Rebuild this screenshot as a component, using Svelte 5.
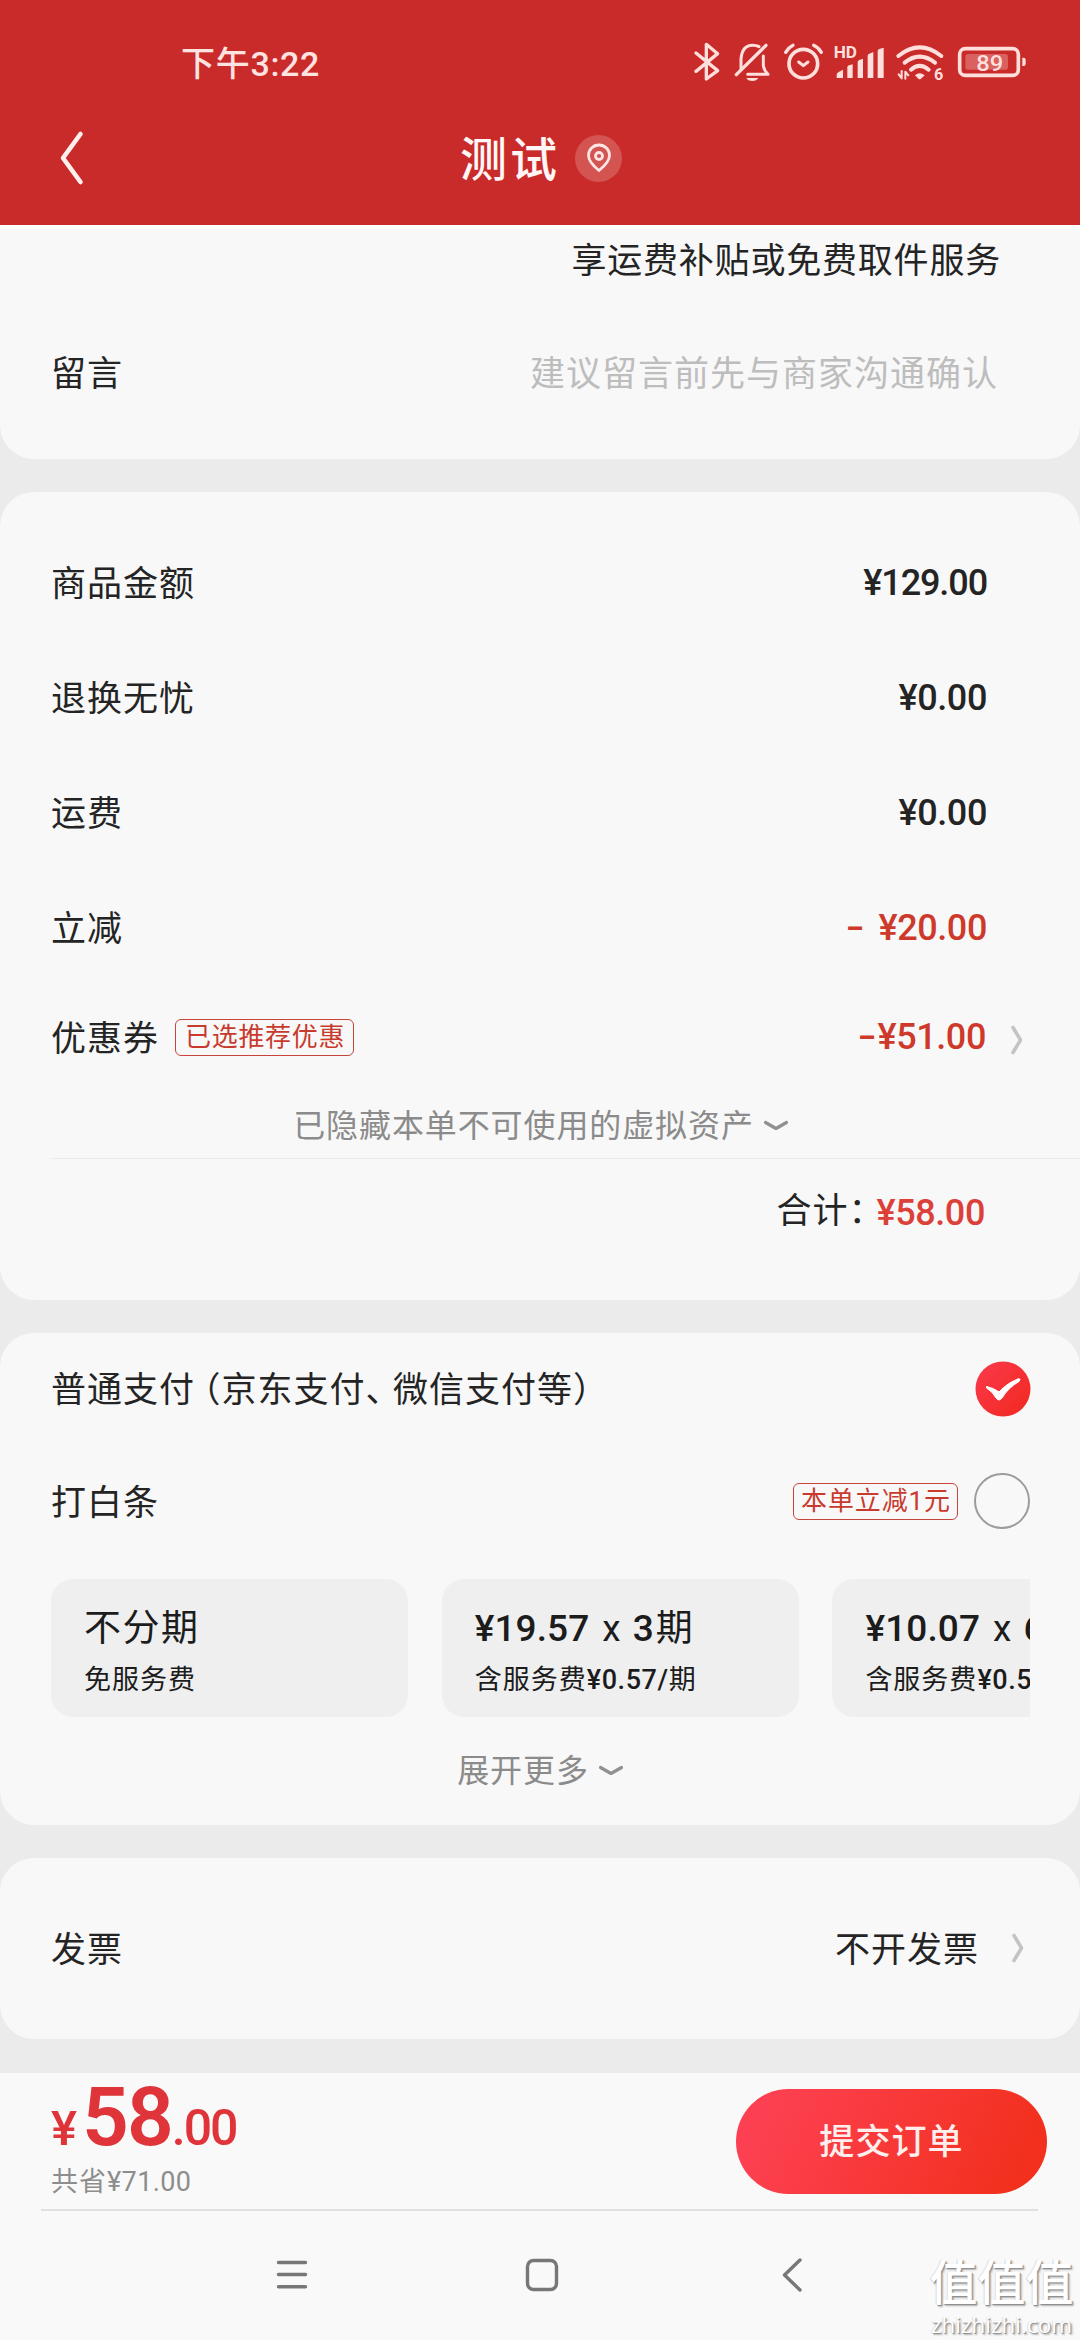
<script>
  const fees = [
    { label: '商品金额', value: '¥129.00', long: true },
    { label: '退换无忧', value: '¥0.00' },
    { label: '运费', value: '¥0.00' },
    { label: '立减', value: '¥20.00', sign: '-', red: true }
  ];
  const plans = [
    { price: '', times: '', title: '不分期', note: '免服务费', fee: '' },
    { price: '¥19.57', times: '3', title: '期', note: '含服务费', fee: '¥0.57/', unit: '期' },
    { price: '¥10.07', times: '6', title: '期', note: '含服务费', fee: '¥0.57/', unit: '期' }
  ];
</script>

{#snippet right()}
  <svg class="right" viewBox="0 0 14 30" width="14" height="30"><path d="M3 2.5 L10.5 15 L3 27.5" /></svg>
{/snippet}
{#snippet down()}
  <svg class="down" viewBox="0 0 24 12" width="24" height="12"><path d="M1.5 2.5 L12 8.5 L22.5 2.5" /></svg>
{/snippet}

<div class="screen">
  <header>
    <div class="status">
      <span class="time">下午3:22</span>
      <svg class="icons" width="360" height="70" viewBox="0 0 1080 210">
        <g class="line">
          <path d="M48 69 L113 122 L79 147 V43 L113 71 L48 124" stroke-width="10" />
          <path d="M183 116 V88 Q186 46 218 46 Q230 46 237 50 M250 78 V107 Q252 121 264 133 H203" stroke-width="9" />
          <path d="M169 134 L258 46" stroke-width="10" />
          <circle cx="370" cy="101" r="43" stroke-width="11" />
          <path d="M317 67 Q325 53 339 46 M401 46 Q416 53 424 67" stroke-width="10" />
          <path d="M356 96 L370 107 L384 96" stroke-width="9" />
          <path d="M655 78 Q719 26 784 78" stroke-width="12" />
          <path d="M674 98 Q719 62 765 98" stroke-width="12" />
          <path d="M693 119 Q719 96 746 119" stroke-width="12" />
          <path d="M656 133 L665 145 V123 M676 146 V125 L685 136" stroke-width="6" />
          <rect x="839" y="56" width="176" height="80" rx="17" stroke-width="11" />
        </g>
        <g class="solid">
          <path d="M199 144 H235 Q230 153 217 153 Q204 153 199 144Z" />
          <path d="M470 144 V134 Q470 129 476 126 L489 119 V144Z" />
          <path d="M502 144 V112 Q502 108 507 106 L518 103 V144Z" />
          <path d="M533 144 V96 Q533 92 538 90 L549 86 V144Z" />
          <path d="M563 144 V77 Q563 73 568 71 L580 66 V144Z" />
          <path d="M593 144 V63 Q593 59 598 57 L611 53 V144Z" />
          <path d="M705 136 Q719 123 734 136 L723 146 Q719 149 715 146Z" />
          <path d="M1027 83 H1031 Q1037 83 1037 90 V101 Q1037 108 1031 108 H1027Z" />
          <rect x="856" y="72" width="128" height="47" rx="8" opacity=".3" />
        </g>
        <text class="heavy" x="461" y="84" font-size="48" textLength="70" lengthAdjust="spacingAndGlyphs">HD</text>
        <text class="heavy" x="762" y="150" font-size="50" textLength="28" lengthAdjust="spacingAndGlyphs">6</text>
        <text x="889" y="122" font-size="68" textLength="81" lengthAdjust="spacingAndGlyphs">89</text>
      </svg>
    </div>
    <div class="nav">
      <svg class="back" width="28" height="60" viewBox="0 0 28 60"><path d="M22.500 6 L5 30 L22.500 54" /></svg>
      <h1>测试</h1>
      <span class="pin">
        <svg width="26" height="30" viewBox="0 0 26 30">
          <path d="M13 27.500 Q2.500 19 2.500 12.500 A10.500 10.500 0 0 1 23.500 12.500 Q23.500 19 13 27.500Z" />
          <circle cx="13" cy="13" r="3.500" />
        </svg>
      </span>
    </div>
  </header>

  <main>
    <section class="card message">
      <p class="service">享运费补贴或免费取件服务</p>
      <div class="row note"><span>留言</span><span class="hint">建议留言前先与商家沟通确认</span></div>
    </section>

    <section class="card fees">
      {#each fees as fee}
        <div class="row fee">
          <span>{fee.label}</span>
          <span class="money" class:red={fee.red} class:long={fee.long}>{#if fee.sign}<span class="sign apart">{fee.sign}</span>{/if}{fee.value}</span>
        </div>
      {/each}
      <div class="row coupon">
        <span>优惠券</span>
        <span class="tag">已选推荐优惠</span>
        <span class="money red end"><span class="sign">-</span>¥51.00</span>
        {@render right()}
      </div>
      <div class="more hidden-assets"><span>已隐藏本单不可使用的虚拟资产</span>{@render down()}</div>
      <div class="row total"><span class="sum">合计：</span><span class="money bright">¥58.00</span></div>
    </section>

    <section class="card pay">
      <div class="row method">
        <span>普通支付<i class="open">（</i>京东支付<i class="comma">、</i>微信支付等）</span>
        <svg class="check" width="56" height="56" viewBox="0 0 56 56">
          <defs>
            <linearGradient id="checkFill" x1="0" y1="0" x2="1" y2="1"><stop offset="0" stop-color="#fa3a4c" /><stop offset="1" stop-color="#f2281f" /></linearGradient>
          </defs>
          <circle cx="28" cy="28" r="27.500" fill="url(#checkFill)" />
          <path d="M11.500 25.500 Q19 27 24 31 Q32 22 44 17.500 Q46 18.500 44 20.500 Q33 27 27 37 Q24 41 21 37 Q18 31 11.500 27Z" fill="#fff" stroke="#fff" stroke-width="1" />
        </svg>
      </div>
      <div class="row credit">
        <span>打白条</span>
        <span class="tag offer">本单立减1元</span>
        <span class="radio"></span>
      </div>
      <div class="plans">
        {#each plans as plan}
          <div class="plan">
            <div class="plan-title">
              {#if plan.price}<b>{plan.price}</b><span class="times">x</span><b class="count">{plan.times}</b>{/if}<span>{plan.title}</span>
            </div>
            <div class="plan-note">{plan.note}{#if plan.fee}<b>{plan.fee}</b>{plan.unit}{/if}</div>
          </div>
        {/each}
      </div>
      <div class="more expand"><span>展开更多</span>{@render down()}</div>
    </section>

    <section class="card invoice">
      <div class="row inv"><span>发票</span><span class="end">不开发票</span>{@render right()}</div>
    </section>
  </main>

  <footer>
    <div class="submit">
      <div class="amount">
        <div class="big"><span class="yen">¥</span><span class="int">58</span><span class="dec">.00</span></div>
        <div class="saved">共省<span>¥71.00</span></div>
      </div>
      <button>提交订单</button>
    </div>
    <div class="system">
      <svg width="36" height="36" viewBox="0 0 36 36"><path d="M4.500 5.500 H31.500 M4.500 17.500 H31.500 M4.500 29.700 H31.500" /></svg>
      <svg width="36" height="36" viewBox="0 0 36 36"><rect x="3.500" y="3.500" width="29" height="29" rx="6" /></svg>
      <svg width="36" height="36" viewBox="0 0 36 36"><path d="M26 3 L10.500 18 L26 33" /></svg>
    </div>
  </footer>

  <div class="mark">
    <span class="mark-name">值值值</span>
    <span class="mark-url">zhizhizhi.com</span>
  </div>
</div>

<style>
  :global(body) { background: #ebebeb; }
  * { box-sizing: border-box; margin: 0; }
  .screen {
    position: relative;
    width: 1080px;
    height: 2340px;
    overflow: hidden;
    display: flex;
    flex-direction: column;
    background: #ebebeb;
    color: #242424;
    font: 400 35px/50px Roboto, "Noto Sans CJK SC", sans-serif;
    letter-spacing: 1px;
    white-space: nowrap;
  }
  svg { display: block; flex: none; fill: none; }

  header { height: 225px; background: #c92b2a; color: #fff0ee; }
  .status { height: 100px; padding: 30px 40px 0 181px; display: flex; justify-content: space-between; }
  .time { height: 70px; line-height: 68px; font-size: 34px; font-weight: 500; letter-spacing: .7px; color: #ffe3e0; }
  .icons .line { stroke: #ffdfdc; stroke-linecap: round; stroke-linejoin: round; }
  .icons .solid { fill: #ffdfdc; }
  .icons text { fill: #ffdfdc; font-weight: 500; letter-spacing: 0; }
  .icons text.heavy { font-weight: 700; }
  .nav { height: 116px; display: flex; align-items: center; padding-left: 58px; }
  .back path { stroke: #fff0ee; stroke-width: 4.6; stroke-linecap: round; stroke-linejoin: round; }
  h1 { margin-left: 374px; font-size: 47px; font-weight: 500; letter-spacing: 3px; line-height: 70px; padding-top: 4px; color: #fff6f5; }
  .pin {
    width: 47px;
    height: 47px;
    margin-left: 15px;
    border-radius: 50%;
    background: #d45452;
    display: grid;
    place-items: center;
  }
  .pin path, .pin circle { stroke: #ffe6e4; stroke-width: 2.8; }

  main { display: flex; flex-direction: column; gap: 33px; }
  .card { background: #f8f8f8; border-radius: 34px; }
  .row { display: flex; align-items: center; padding-left: 51px; }
  .end { margin-left: auto; }

  .message { height: 234px; border-radius: 0 0 34px 34px; border-top: 4px solid #fdfdfd; }
  .service { height: 65px; line-height: 66px; text-align: right; padding-right: 79px; letter-spacing: .8px; }
  .note { height: 161px; justify-content: space-between; padding-right: 82px; }
  .hint { color: #bdbdbd; }

  .fees { height: 808px; padding-top: 35px; }
  .fee { height: 115px; justify-content: space-between; padding-right: 93px; }
  .money { font-size: 36px; font-weight: 500; letter-spacing: -.4px; padding-bottom: 3px; }
  .long { letter-spacing: -1.100px; }
  .sign { display: inline-block; transform: scaleX(1.5); margin-right: 5px; }
  .apart { margin-right: 18px; }
  .red { color: #cd3a2b; }
  .bright { color: #dc4038; }
  .coupon { height: 106px; padding-right: 56px; }
  .coupon .money { padding-bottom: 6px; }
  .tag {
    height: 37px;
    margin-left: 16px;
    padding: 0 8px 0 9px;
    border: 1.500px solid #c8453c;
    border-radius: 6px;
    color: #c93a2e;
    font-size: 26px;
    line-height: 35px;
    letter-spacing: .7px;
  }
  .coupon .tag { margin-top: -6px; }
  .right { margin-left: 24px; }
  .right path { stroke: #c4c4c4; stroke-width: 3.600; stroke-linecap: round; stroke-linejoin: round; }
  .down path { stroke: #909090; stroke-width: 3.200; stroke-linecap: round; stroke-linejoin: round; }
  .more { display: flex; align-items: center; justify-content: center; gap: 10px; color: #8b8b8b; font-size: 32px; letter-spacing: .9px; }
  .hidden-assets { height: 66px; margin-left: 51px; padding-right: 50px; border-bottom: 1px solid #ebebeb; }
  .total { height: 106px; justify-content: flex-end; padding-right: 95px; }
  .sum { margin-right: -8px; }
  .total .money { padding: 2px 0 0; }

  .pay { height: 492px; }
  .method { height: 115px; justify-content: space-between; padding-right: 49px; }
  i { font-style: normal; font-feature-settings: "halt"; }
  .open { margin-left: 8px; }
  .comma { margin-right: 9px; }
  .check { margin-top: -4px; }
  .credit { height: 112px; padding-right: 50px; }
  .offer { margin: -6px 0 0 auto; padding: 0 6px 0 7px; letter-spacing: .9px; }
  .radio { width: 56px; height: 56px; margin: -6px 0 0 16px; border: 2px solid #9c9c9c; border-radius: 50%; }
  .plans { margin: 19px 50px 0 51px; display: flex; gap: 33.700px; overflow: hidden; }
  .plan { flex: none; width: 357px; height: 138px; padding: 24px 0 0 33px; border-radius: 22px; background: #efefef; color: #1c1c1c; }
  .plan b { font-weight: 500; }
  .plan-title { display: flex; font-size: 37px; line-height: 52px; letter-spacing: 1.500px; }
  .plan-title b { letter-spacing: .1px; }
  .plan-title .count { margin-right: 2px; }
  .times { margin: 0 12px 0 13px; letter-spacing: 0; }
  .plan-note { font-size: 27px; line-height: 50px; letter-spacing: 1px; }
  .plan-note b { letter-spacing: .6px; }
  .expand { height: 108px; }

  .invoice { height: 181px; }
  .inv { height: 186px; padding-right: 55px; }
  .inv .right { margin: -7px 0 0 32px; }

  footer { margin-top: 34px; flex: 1; background: #f9f9f9; }
  .submit { height: 138px; margin: 0 42px 0 41px; border-bottom: 2px solid #e0e0e0; display: flex; justify-content: space-between; }
  .amount { padding-left: 10px; }
  .big { height: 88px; line-height: 88px; color: #df3439; display: flex; align-items: baseline; }
  .yen { font-size: 49px; font-weight: 500; }
  .int { font-size: 82px; font-weight: 600; letter-spacing: -2px; margin-left: 4px; }
  .dec { font-size: 50px; font-weight: 500; letter-spacing: -2px; }
  .saved { color: #8d8d8d; font-size: 27px; line-height: 42px; }
  .saved span { letter-spacing: .4px; }
  button {
    width: 311px;
    height: 105px;
    margin: 16px -9px 0 0;
    padding: 0;
    border: 0;
    border-radius: 53px;
    background: linear-gradient(115deg, #fd4051 12%, #f2301d 90%);
    color: #ffefec;
    font: 500 35px/107px Roboto, "Noto Sans CJK SC", sans-serif;
    letter-spacing: 1.100px;
  }
  .system { height: 128px; padding: 0 270px 0 274px; display: flex; align-items: center; justify-content: space-between; }
  .system svg { stroke: #777; stroke-width: 3.400; stroke-linecap: round; stroke-linejoin: round; }

  .mark {
    position: absolute;
    right: 6px;
    bottom: 0;
    width: 145px;
    display: flex;
    flex-direction: column;
    align-items: center;
    color: #fff;
    letter-spacing: 0;
    text-shadow: 1px 1px 1px #8c8c8c, 2px 2px 2px #b5b5b5, -1px 0 1px #ddd;
  }
  .mark-name { font-size: 48px; font-weight: 500; line-height: 52px; }
  .mark-url { font: 400 22.500px/30px "Open Sans", sans-serif; }
</style>
